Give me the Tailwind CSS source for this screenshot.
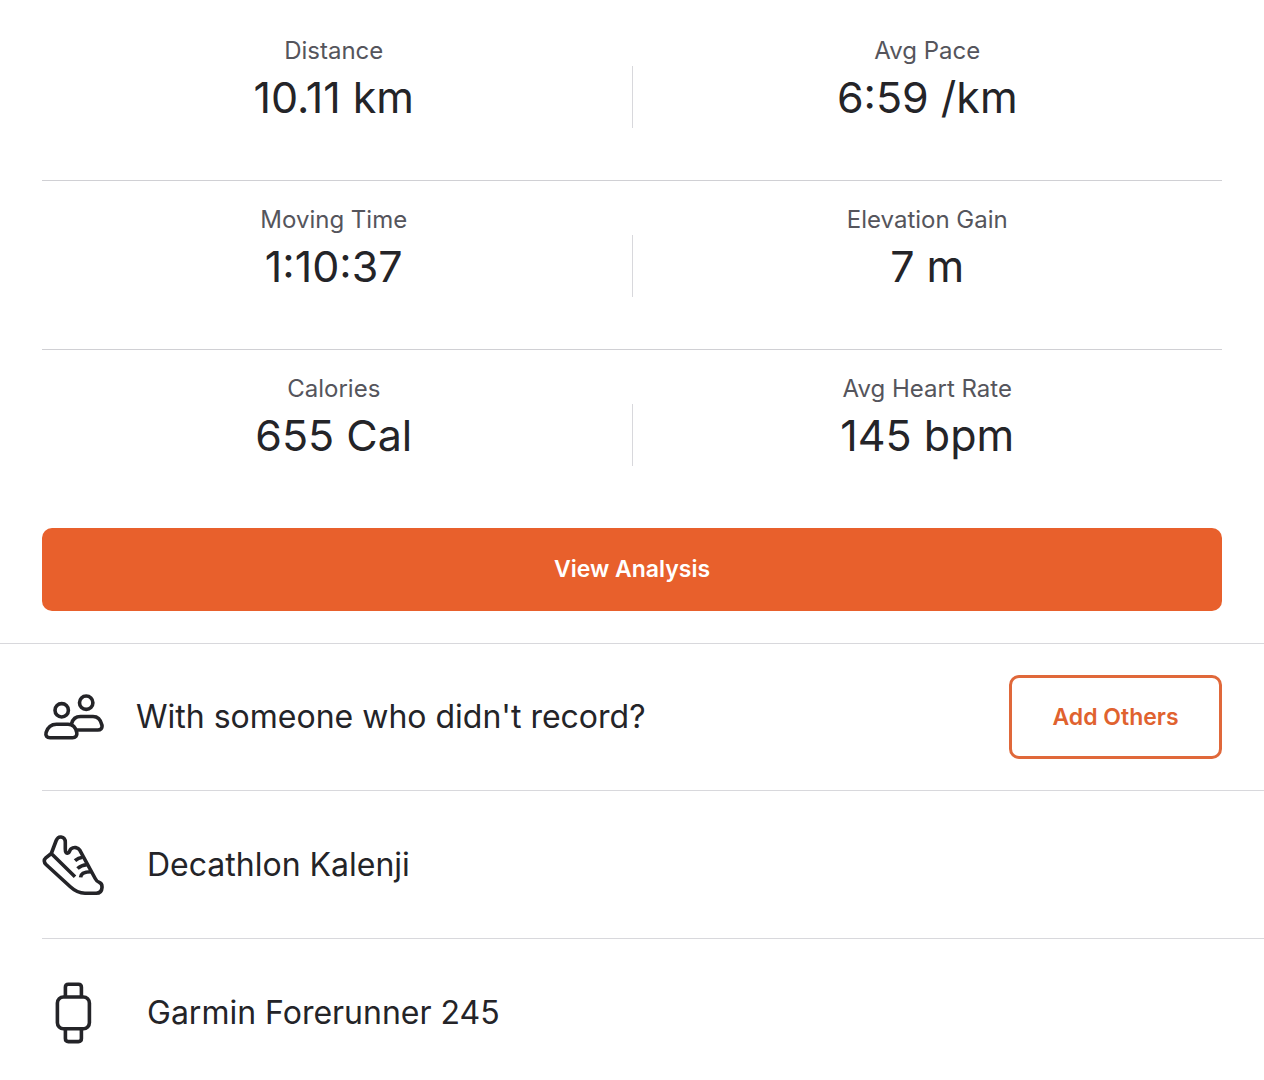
<!DOCTYPE html>
<html lang="en">
<head>
  <meta charset="utf-8" />
  <title>Activity</title>
  <meta name="viewport" content="width=device-width, initial-scale=1" />
  <script src="https://cdn.jsdelivr.net/npm/@tailwindcss/browser@4"></script>
</head>

<body class="min-h-screen bg-white text-[#242428] font-['Inter',sans-serif]">

  <!-- ───── Stats ───── -->
  <main class="pt-3">
    <dl class="mx-[42px] divide-y divide-[#d0d0d4]">

      <div class="grid grid-cols-[1fr_1px_1fr] pt-[23px] pb-[52px] text-center">
        <div class="pr-1.5">
          <dt class="text-2xl leading-8 text-[#55555c]">Distance</dt>
          <dd class="mt-1.5 text-[43px] leading-[48px]">10.11 km</dd>
        </div>
        <span class="mt-[31px] h-[62px] bg-[#d8d8dc]"></span>
        <div>
          <dt class="text-2xl leading-8 text-[#55555c]">Avg Pace</dt>
          <dd class="mt-1.5 text-[43px] leading-[48px]">6:59 /km</dd>
        </div>
      </div>

      <div class="grid grid-cols-[1fr_1px_1fr] pt-[23px] pb-[52px] text-center">
        <div class="pr-1.5">
          <dt class="text-2xl leading-8 text-[#55555c]">Moving Time</dt>
          <dd class="mt-1.5 text-[43px] leading-[48px]">1:10:37</dd>
        </div>
        <span class="mt-[31px] h-[62px] bg-[#d8d8dc]"></span>
        <div>
          <dt class="text-2xl leading-8 text-[#55555c]">Elevation Gain</dt>
          <dd class="mt-1.5 text-[43px] leading-[48px]">7 m</dd>
        </div>
      </div>

      <div class="grid grid-cols-[1fr_1px_1fr] pt-[23px] pb-[52px] text-center">
        <div class="pr-1.5">
          <dt class="text-2xl leading-8 text-[#55555c]">Calories</dt>
          <dd class="mt-1.5 text-[43px] leading-[48px]">655 Cal</dd>
        </div>
        <span class="mt-[31px] h-[62px] bg-[#d8d8dc]"></span>
        <div>
          <dt class="text-2xl leading-8 text-[#55555c]">Avg Heart Rate</dt>
          <dd class="mt-1.5 text-[43px] leading-[48px]">145 bpm</dd>
        </div>
      </div>
    </dl>

    <div class="px-[42px] pt-[10px] pb-8">
      <button class="w-full h-[83px] rounded-[10px] bg-[#e8602c] text-white text-[23px] font-semibold cursor-pointer">View Analysis</button>
    </div>

    <!-- ───── People and gear ───── -->
    <section class="border-t border-[#d8d8dc]">
      <div class="ml-[42px] pr-[42px] h-[146px] flex items-center gap-8">
        <svg class="size-[62px] shrink-0" viewBox="0 0 62 62" fill="none" stroke="currentColor" stroke-width="3.6" stroke-linecap="round" stroke-linejoin="round" aria-hidden="true">
          <circle cx="19.7" cy="24.3" r="6.7" />
          <circle cx="44.2" cy="16.7" r="6.7" />
          <path d="M8 51.8H30.5C33.5 51.8 35.3 49.6 34.8 46.8C33.8 41.5 30.5 38.3 26 38.3H14.5C9 38.3 5.5 42 4.1 46.6C3.2 49.8 5 51.8 8 51.8Z" />
          <path d="M29.6 37.6C30.8 33 34 30.5 38.5 30.5H51C55.8 30.5 58.8 34.2 59.9 39C60.6 42.2 58.6 44 55.8 44H35.5" />
        </svg>
        <p class="grow text-[32px] leading-10">With someone who didn't record?</p>
        <button class="h-[84px] w-[213px] shrink-0 rounded-[10px] border-3 border-[#e0683a] text-[#e0622f] text-[23px] font-semibold cursor-pointer">Add Others</button>
      </div>

      <div class="ml-[42px] h-[148px] border-t border-[#d8d8dc] flex items-center gap-[43px]">
        <svg class="size-[62px] shrink-0" viewBox="0 0 62 62" fill="none" stroke="currentColor" stroke-width="3.6" stroke-linejoin="round" aria-hidden="true">
          <path d="M9.3 19.5L14.2 6.5C15.4 3.6 17 2.7 19 3C21.9 3.4 23.3 5.4 23.3 8.3V15C23.3 17.5 24.1 19.3 25.7 19.3C27.7 19.3 27.2 16.4 29 14.9C31.8 12.7 36 13.3 37.9 16.3L53.2 44.5C54.4 46.8 55 47.8 57 48.3C59.3 49 60.2 50.7 60 53.5C59.8 56.9 57.7 59.2 54.2 59.2H43C37.4 59.2 32.4 56.6 28.3 52.8L4 30.5C1.8 28.4 1.7 25.8 3.8 23.9L9.3 19.5L33 42.7" />
          <path d="M40.6 23.3C38.5 23.5 35.3 24.6 33 26.7M44.8 30.7C41.7 30.8 38 32.2 35.5 34.5M49 37.8C44.5 37.8 38.8 39 38.6 43.4" />
        </svg>
        <p class="text-[32px] leading-10">Decathlon Kalenji</p>
      </div>

      <div class="ml-[42px] h-[148px] border-t border-[#d8d8dc] flex items-center gap-[43px]">
        <svg class="size-[62px] shrink-0" viewBox="0 0 62 62" fill="none" stroke="currentColor" stroke-width="3.6" stroke-linejoin="round" aria-hidden="true">
          <rect x="15.4" y="15" width="32" height="31.8" rx="6" />
          <path d="M23.4 15V5.2C23.4 3.4 24.6 2.2 26.4 2.2H36.4C38.2 2.2 39.4 3.4 39.4 5.2V15M23.4 46.8V56.6C23.4 58.4 24.6 59.6 26.4 59.6H36.4C38.2 59.6 39.4 58.4 39.4 56.6V46.8" />
        </svg>
        <p class="text-[32px] leading-10">Garmin Forerunner 245</p>
      </div>
    </section>
  </main>
</body>
</html>
